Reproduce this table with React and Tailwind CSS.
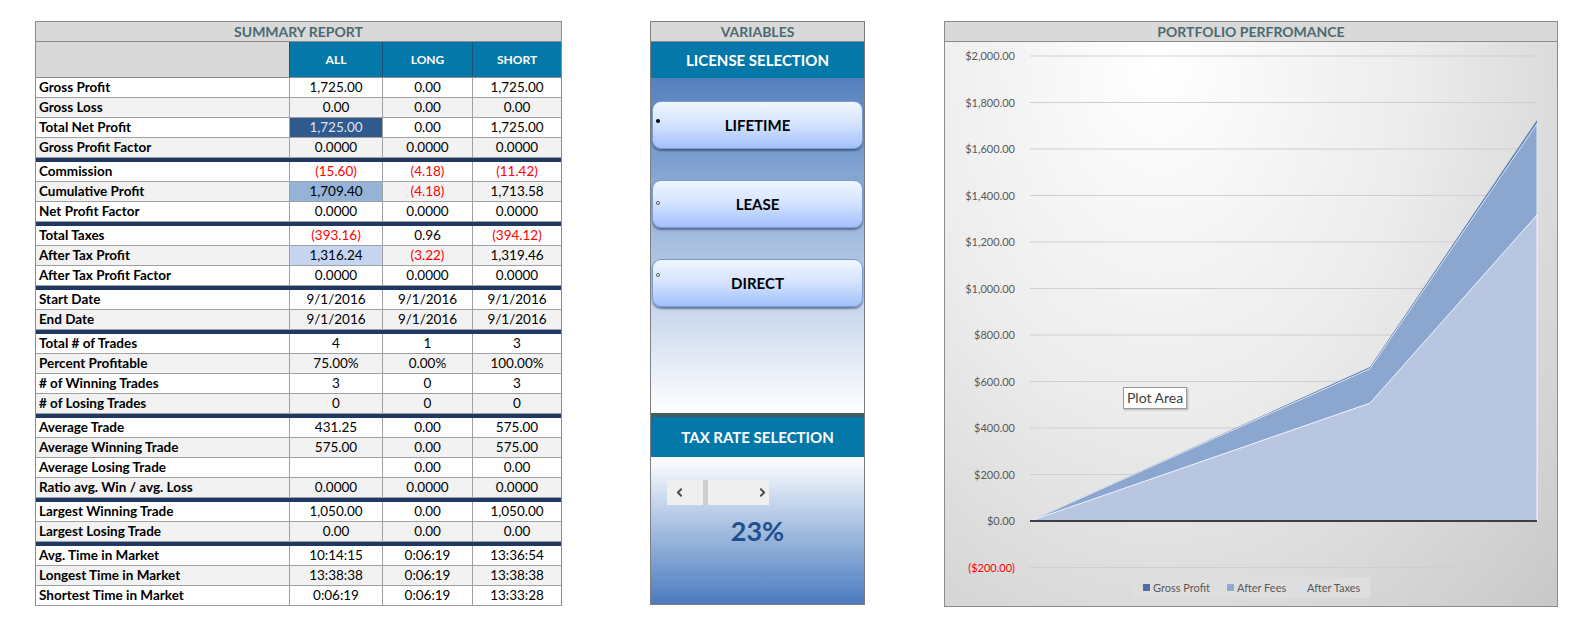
import React from 'react';
import { ChevronLeft, ChevronRight } from 'lucide-react';

const groups = [
    [
        ['Gross Profit', '1,725.00', '0.00', '1,725.00'],
        ['Gross Loss', '0.00', '0.00', '0.00'],
        ['Total Net Profit', '1,725.00', '0.00', '1,725.00'],
        ['Gross Profit Factor', '0.0000', '0.0000', '0.0000'],
    ],
    [
        ['Commission', '(15.60)', '(4.18)', '(11.42)'],
        ['Cumulative Profit', '1,709.40', '(4.18)', '1,713.58'],
        ['Net Profit Factor', '0.0000', '0.0000', '0.0000'],
    ],
    [
        ['Total Taxes', '(393.16)', '0.96', '(394.12)'],
        ['After Tax Profit', '1,316.24', '(3.22)', '1,319.46'],
        ['After Tax Profit Factor', '0.0000', '0.0000', '0.0000'],
    ],
    [
        ['Start Date', '9/1/2016', '9/1/2016', '9/1/2016'],
        ['End Date', '9/1/2016', '9/1/2016', '9/1/2016'],
    ],
    [
        ['Total # of Trades', '4', '1', '3'],
        ['Percent Profitable', '75.00%', '0.00%', '100.00%'],
        ['# of Winning Trades', '3', '0', '3'],
        ['# of Losing Trades', '0', '0', '0'],
    ],
    [
        ['Average Trade', '431.25', '0.00', '575.00'],
        ['Average Winning Trade', '575.00', '0.00', '575.00'],
        ['Average Losing Trade', '', '0.00', '0.00'],
        ['Ratio avg. Win / avg. Loss', '0.0000', '0.0000', '0.0000'],
    ],
    [
        ['Largest Winning Trade', '1,050.00', '0.00', '1,050.00'],
        ['Largest Losing Trade', '0.00', '0.00', '0.00'],
    ],
    [
        ['Avg. Time in Market', '10:14:15', '0:06:19', '13:36:54'],
        ['Longest Time in Market', '13:38:38', '0:06:19', '13:38:38'],
        ['Shortest Time in Market', '0:06:19', '0:06:19', '13:33:28'],
    ],
];

const highlight = {
    'Total Net Profit': 'bg-[#305a8e] text-[#dde4ef]',
    'Cumulative Profit': 'bg-[#95b3d7]',
    'After Tax Profit': 'bg-[#c5d5f0]',
};

const font = { fontFamily: 'Lato, "Open Sans", sans-serif' };

function SummaryTable() {
    return (
        <div className="w-[527px] border-l border-r border-t border-[#8c8c8c] text-[13.5px]">
            <div className="h-[20px] bg-[#d9d9d9] border-b border-[#8c8c8c] flex items-center justify-center font-bold text-[14px] text-[#4b6a72]">
                SUMMARY REPORT
            </div>
            <div className="h-[36px] grid grid-cols-[253px_93px_90px_1fr] border-b border-[#8c8c8c]">
                <div className="bg-[#d9d9d9]" />
                {['ALL', 'LONG', 'SHORT'].map(h => (
                    <div key={h} className="bg-[#0479a9] border-l border-[#1f4e79] flex items-center justify-center text-white font-bold text-[12px]">{h}</div>
                ))}
            </div>
            {groups.map((rows, gi) => (
                <React.Fragment key={gi}>
                    {gi > 0 && <div className="h-[4px] bg-[#1f3864]" />}
                    {rows.map((r, ri) => (
                        <div key={r[0]} className={`h-[20px] grid grid-cols-[253px_93px_90px_1fr] border-b border-[#a0a0a0] ${ri % 2 ? 'bg-[#f2f2f2]' : 'bg-white'}`}>
                            <div className="pl-[3px] font-bold text-black leading-[19px] whitespace-nowrap">{r[0]}</div>
                            {r.slice(1).map((v, vi) => (
                                <div
                                    key={vi}
                                    className={`border-l border-[#a0a0a0] text-center leading-[19px] ${vi === 0 && highlight[r[0]] ? highlight[r[0]] : ''} ${v.startsWith('(') ? 'text-[#ff0000]' : vi === 0 && r[0] === 'Total Net Profit' ? '' : 'text-black'}`}
                                >
                                    {v}
                                </div>
                            ))}
                        </div>
                    ))}
                </React.Fragment>
            ))}
        </div>
    );
}

function LicenseButton({ label, selected, dotTop }) {
    return (
        <div className="relative mx-[1px] h-[48px] rounded-[9px] border border-[#7d9bd0] bg-gradient-to-b from-[#f1f6ff] via-[#d3e2ff] to-[#a3c1fb] shadow-[0_2px_2px_rgba(30,50,90,0.55)] flex items-center justify-center font-bold text-[15px] text-black">
            <span
                className={`absolute left-[3px] w-[4px] h-[4px] rounded-full ${selected ? 'bg-black' : 'bg-white border border-[#555]'}`}
                style={{ top: dotTop }}
            />
            {label}
        </div>
    );
}

function VariablesPanel() {
    return (
        <div className="w-[215px] h-[584px] border border-[#7f7f7f] flex flex-col">
            <div className="h-[20px] bg-[#d9d9d9] border-b border-[#8c8c8c] flex items-center justify-center font-bold text-[14px] text-[#4b6a72]">
                VARIABLES
            </div>
            <div className="h-[36px] bg-[#0479a9] flex items-center justify-center font-bold text-[15px] text-white">
                LICENSE SELECTION
            </div>
            <div className="flex-1 bg-gradient-to-b from-[#5580be] to-[#ffffff] flex flex-col pt-[23px] gap-[31px]">
                <LicenseButton label="LIFETIME" selected dotTop="17px" />
                <LicenseButton label="LEASE" dotTop="20px" />
                <LicenseButton label="DIRECT" dotTop="13px" />
            </div>
            <div className="h-[4px] bg-[#3f5e62]" />
            <div className="h-[40px] bg-[#0479a9] flex items-center justify-center font-bold text-[15px] text-white">
                TAX RATE SELECTION
            </div>
            <div className="h-[147px] bg-gradient-to-b from-[#ffffff] to-[#4a7bbd] pt-[23px]">
                <div className="ml-[16px] w-[102px] h-[25px] bg-[#efefef] flex items-center">
                    <ChevronLeft size={13} strokeWidth={3.5} className="ml-[6px] text-[#4a4a4a]" />
                    <div className="ml-[17px] w-[5px] h-full bg-[#cfcfcf]" />
                    <ChevronRight size={13} strokeWidth={3.5} className="ml-[48px] text-[#4a4a4a]" />
                </div>
                <div className="mt-[12px] text-center font-bold text-[27px] leading-none text-[#1f4f8f]">23%</div>
            </div>
        </div>
    );
}

const yLabels = ['$2,000.00', '$1,800.00', '$1,600.00', '$1,400.00', '$1,200.00', '$1,000.00', '$800.00', '$600.00', '$400.00', '$200.00', '$0.00', '($200.00)'];

const toY = v => 479 - v * 0.2325;
const xs = [85, 425, 592];
const series = {
    gross: [0, 662, 1725],
    fees: [0, 655, 1709.4],
    taxes: [0, 507, 1316.24],
};
const areaPath = vals =>
    `M${xs[0]},${toY(0)} ` + vals.map((v, i) => `L${xs[i]},${toY(v)}`).join(' ') + ` L${xs[2]},${toY(0)} Z`;

function Chart() {
    return (
        <div className="relative w-[614px] h-[586px] border border-[#8c8c8c] flex flex-col">
            <div className="h-[20px] bg-[#d9d9d9] border-b border-[#8c8c8c] flex items-center justify-center font-bold text-[14px] text-[#4b6a72]">
                PORTFOLIO PERFROMANCE
            </div>
            <div className="flex-1 bg-[radial-gradient(ellipse_at_35%_4%,#ffffff_0%,#ececec_45%,#c8c8c8_100%)]">
                <svg width="612" height="564" viewBox="0 0 612 564">
                    {yLabels.map((l, i) => {
                        const y = 14 + i * 46.5;
                        return (
                            <g key={l}>
                                <line x1="85" x2="591" y1={y} y2={y} stroke={i === 10 ? '#3f3f3f' : '#cfcfcf'} strokeWidth={i === 10 ? 2 : 1} />
                                <text x="70" y={y + 4} textAnchor="end" fontSize="11" fill={l.startsWith('(') ? '#ff0000' : '#595959'} style={font}>{l}</text>
                            </g>
                        );
                    })}
                    <path d={areaPath(series.gross)} fill="#5b7fb5" />
                    <path d={areaPath(series.fees)} fill="#8ba6cf" stroke="#dfe8f5" strokeWidth="1" />
                    <path d={areaPath(series.taxes)} fill="#b8c6e2" stroke="#f2f5fb" strokeWidth="1" />
                    <line x1="85" x2="592" y1="479" y2="479" stroke="#3f3f3f" strokeWidth="2" />
                    <rect x="187" y="535" width="238" height="21" fill="#dedede" />
                    <rect x="198" y="542" width="7" height="7" fill="#4f6fa6" />
                    <text x="208" y="549.5" fontSize="11" fill="#595959" style={font}>Gross Profit</text>
                    <rect x="282" y="542" width="7" height="7" fill="#8eaad4" />
                    <text x="292" y="549.5" fontSize="11" fill="#595959" style={font}>After Fees</text>
                    <rect x="355" y="542" width="7" height="7" fill="#d3def0" />
                    <text x="362" y="549.5" fontSize="11" fill="#595959" style={font}>After Taxes</text>
                </svg>
            </div>
            <div className="absolute left-[178px] top-[365px] bg-white border border-[#9a9a9a] px-[3px] text-[14px] leading-[20px] text-[#404040] shadow-[1px_1px_2px_rgba(0,0,0,0.25)]">
                Plot Area
            </div>
        </div>
    );
}

export default function App() {
    return (
        <div className="w-[1573px] h-[619px] bg-white flex items-start pt-[21px] pl-[35px]" style={font}>
            <SummaryTable />
            <div className="ml-[88px]">
                <VariablesPanel />
            </div>
            <div className="ml-[79px]">
                <Chart />
            </div>
        </div>
    );
}
